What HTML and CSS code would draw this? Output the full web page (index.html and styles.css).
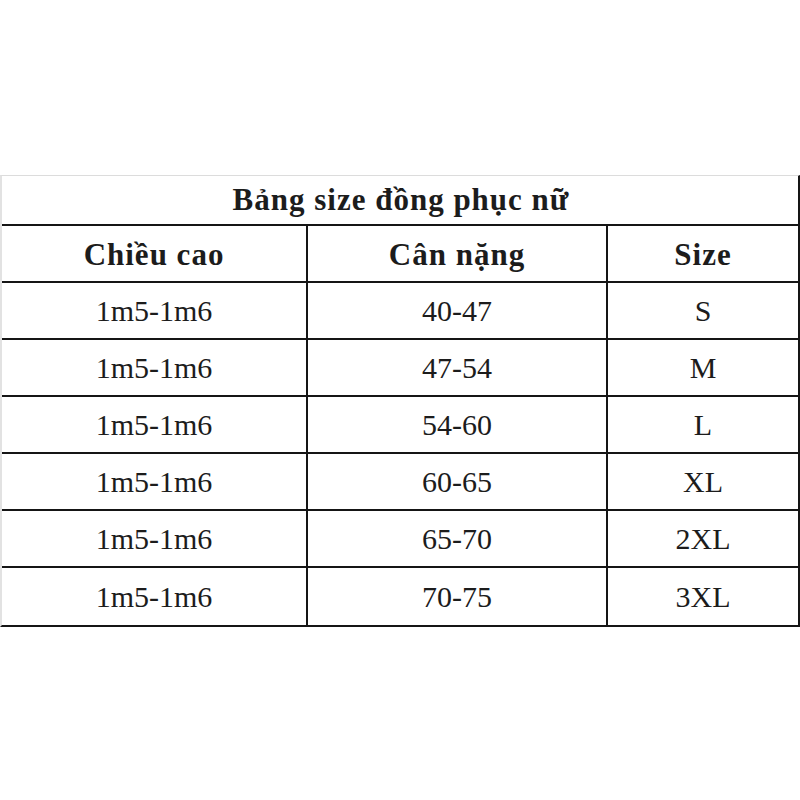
FILE: index.html
```html
<!DOCTYPE html>
<html lang="vi">
<head>
<meta charset="utf-8">
<title>Bảng size đồng phục nữ</title>
<link rel="stylesheet" href="styles.css">
</head>
<body>
<div class="sheet">
  <div class="title">Bảng size đồng phục nữ</div>
  <div class="grid">
    <div class="cell head">Chiều cao</div>
    <div class="cell head">Cân nặng</div>
    <div class="cell head last">Size</div>

    <div class="cell">1m5-1m6</div>
    <div class="cell">40-47</div>
    <div class="cell last">S</div>

    <div class="cell">1m5-1m6</div>
    <div class="cell">47-54</div>
    <div class="cell last">M</div>

    <div class="cell">1m5-1m6</div>
    <div class="cell">54-60</div>
    <div class="cell last">L</div>

    <div class="cell">1m5-1m6</div>
    <div class="cell">60-65</div>
    <div class="cell last">XL</div>

    <div class="cell">1m5-1m6</div>
    <div class="cell">65-70</div>
    <div class="cell last">2XL</div>

    <div class="cell bottom">1m5-1m6</div>
    <div class="cell bottom">70-75</div>
    <div class="cell last bottom">3XL</div>
  </div>
</div>
</body>
</html>
```
FILE: styles.css
```css
html, body {
  margin: 0;
  padding: 0;
  background: #ffffff;
}

body {
  font-family: "Liberation Serif", "Times New Roman", serif;
  color: #1c1c1c;
}

.sheet {
  margin-top: 175px;
  width: 796px;
  border-top: 1px solid #dcdcdc;
  border-left: 2px solid #e2e2e2;
  border-right: 2px solid #151515;
  border-bottom: 2px solid #151515;
}

.title {
  height: 48px;
  border-bottom: 2px solid #151515;
  display: flex;
  align-items: center;
  justify-content: center;
  font-weight: bold;
  font-size: 31px;
  letter-spacing: 1px;
  padding-left: 2px;
}

.grid {
  display: grid;
  grid-template-columns: 306px 300px 1fr;
  grid-template-rows: repeat(6, 57px) 57px;
}

.cell {
  display: flex;
  align-items: center;
  justify-content: center;
  font-size: 30px;
  border-right: 2px solid #151515;
  border-bottom: 2px solid #151515;
}

.cell.last {
  border-right: none;
}

.cell.bottom {
  border-bottom: none;
}

.cell.head {
  font-weight: bold;
  font-size: 31px;
  letter-spacing: 1px;
  padding-top: 2px;
}
```
